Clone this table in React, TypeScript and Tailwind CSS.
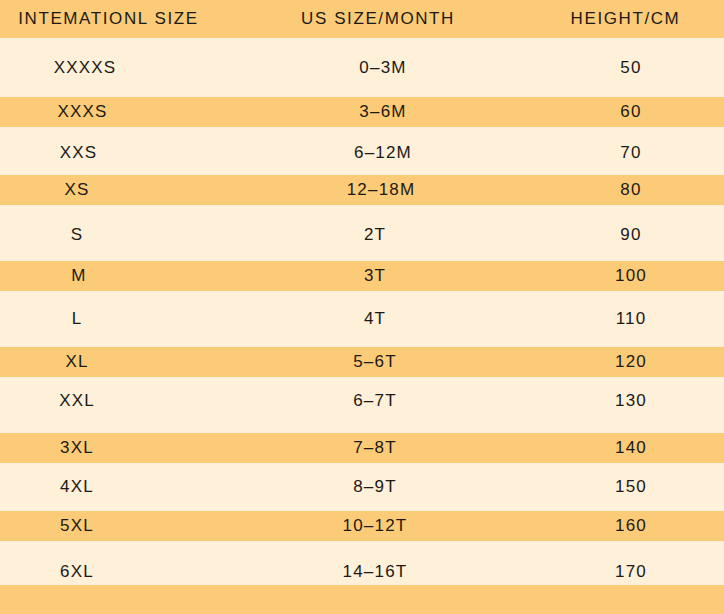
import React from "react";

// size chart rows: h = row height class, shift classes nudge text to match the picture
const rows = [
  { intl: "XXXXS", us: "0–3M", cm: "50", h: "h-[59px]", dark: false, a: "pl-[16px]", b: "pl-[16px]", y: "" },
  { intl: "XXXS", us: "3–6M", cm: "60", h: "h-[30px]", dark: true, a: "pl-[11px]", b: "pl-[16px]", y: "" },
  { intl: "XXS", us: "6–12M", cm: "70", h: "h-[48px]", dark: false, a: "pl-[3px]", b: "pl-[16px]", y: "pt-[3px]" },
  { intl: "XS", us: "12–18M", cm: "80", h: "h-[30px]", dark: true, a: "", b: "pl-[12px]", y: "" },
  { intl: "S", us: "2T", cm: "90", h: "h-[56px]", dark: false, a: "", b: "", y: "pt-[3px]" },
  { intl: "M", us: "3T", cm: "100", h: "h-[30px]", dark: true, a: "pl-[4px]", b: "", y: "" },
  { intl: "L", us: "4T", cm: "110", h: "h-[56px]", dark: false, a: "", b: "", y: "" },
  { intl: "XL", us: "5–6T", cm: "120", h: "h-[30px]", dark: true, a: "", b: "", y: "" },
  { intl: "XXL", us: "6–7T", cm: "130", h: "h-[56px]", dark: false, a: "", b: "", y: "pb-[8px]" },
  { intl: "3XL", us: "7–8T", cm: "140", h: "h-[30px]", dark: true, a: "", b: "", y: "" },
  { intl: "4XL", us: "8–9T", cm: "150", h: "h-[48px]", dark: false, a: "", b: "", y: "" },
  { intl: "5XL", us: "10–12T", cm: "160", h: "h-[30px]", dark: true, a: "", b: "", y: "" },
  { intl: "6XL", us: "14–16T", cm: "170", h: "h-[44px]", dark: false, a: "", b: "", y: "pt-[18px]" },
];

export default function App() {
  return (
    <div
      className="w-[724px] h-[614px] overflow-hidden bg-[#fef0d9] text-[#1c1a17] text-[17px] tracking-[1.2px]"
      style={{ fontFamily: '"Liberation Sans", Arial, sans-serif' }}
    >
      <div className="grid grid-cols-[217px_322px_173px] h-[38px] items-center bg-[#fccb78] text-center tracking-[1.6px]">
        <div>INTEMATIONL SIZE</div>
        <div>US SIZE/MONTH</div>
        <div>HEIGHT/CM</div>
      </div>

      {rows.map((row, i) => (
        <div
          key={i}
          className={`grid grid-cols-[154px_442px_70px] items-center text-center ${row.h} ${row.y} ${
            row.dark ? "bg-[#fccb78]" : "bg-[#fef0d9]"
          }`}
        >
          <div className={row.a}>{row.intl}</div>
          <div className={row.b}>{row.us}</div>
          <div>{row.cm}</div>
        </div>
      ))}

      <div className="h-[29px] bg-[#fccb78]" />
    </div>
  );
}
